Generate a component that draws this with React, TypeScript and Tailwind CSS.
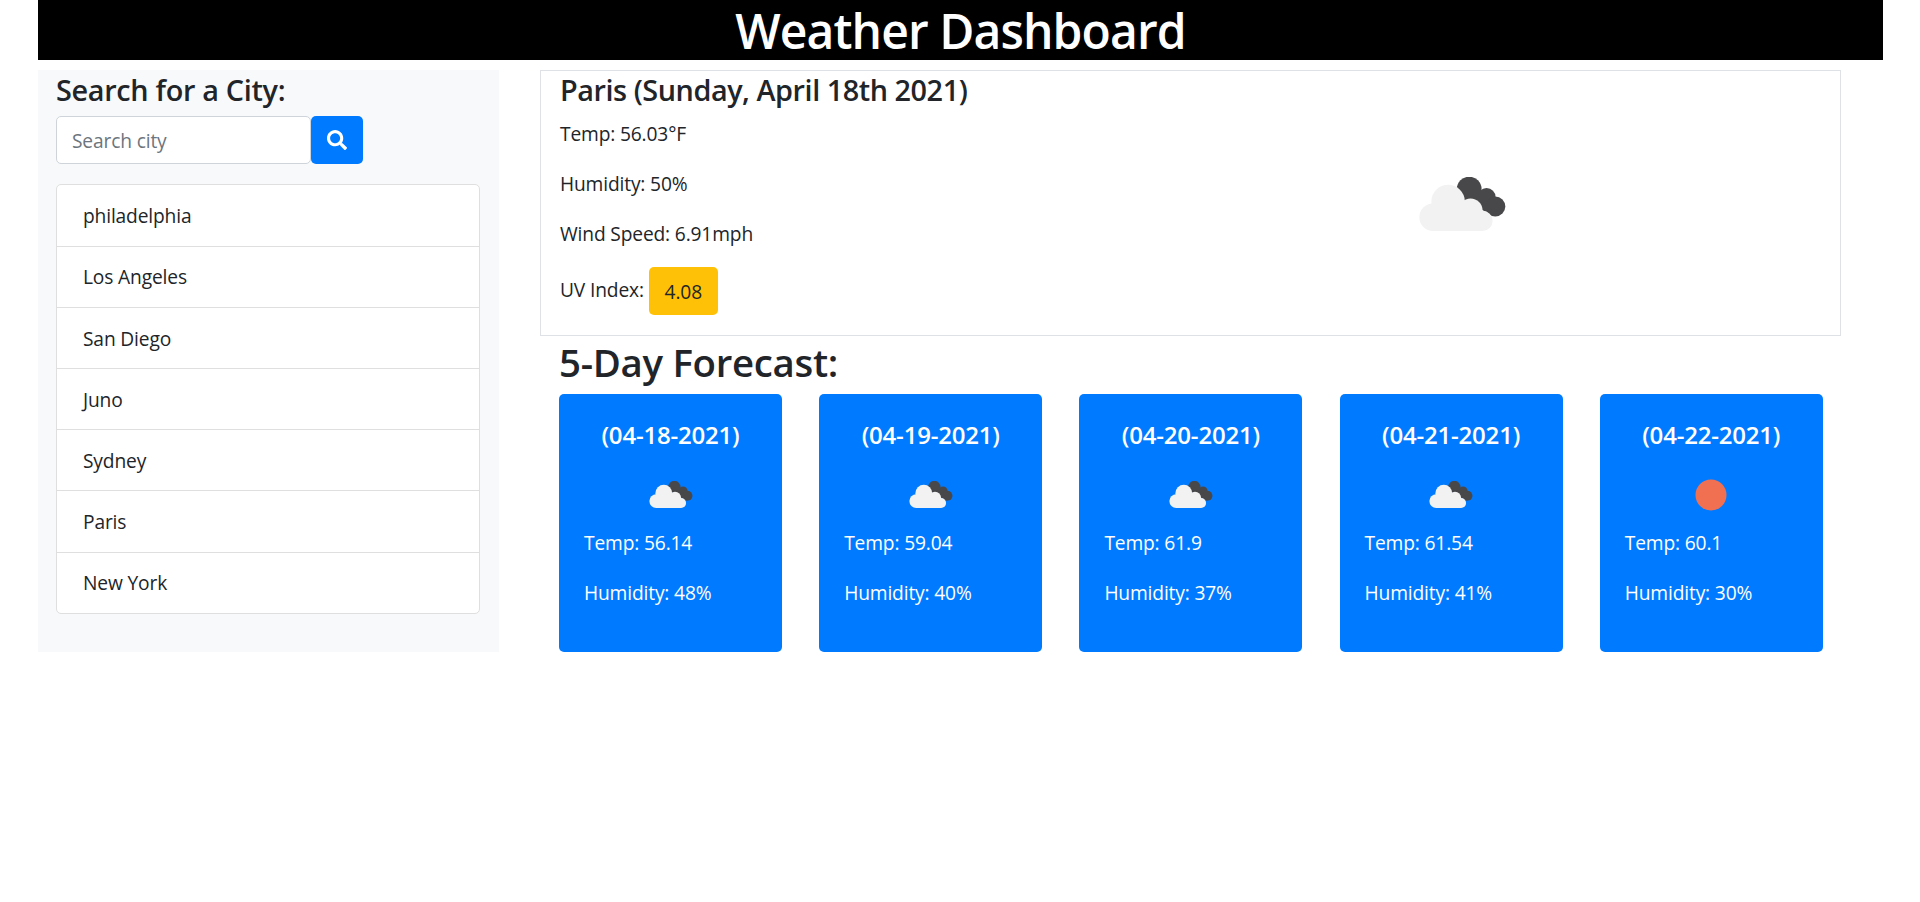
const cities = ['philadelphia', 'Los Angeles', 'San Diego', 'Juno', 'Sydney', 'Paris', 'New York']

const forecast = [
  { date: '(04-18-2021)', temp: '56.14', humidity: '48%', sun: false },
  { date: '(04-19-2021)', temp: '59.04', humidity: '40%', sun: false },
  { date: '(04-20-2021)', temp: '61.9', humidity: '37%', sun: false },
  { date: '(04-21-2021)', temp: '61.54', humidity: '41%', sun: false },
  { date: '(04-22-2021)', temp: '60.1', humidity: '30%', sun: true },
]

function CloudIcon({ className }: { className: string }) {
  return (
    <svg viewBox="118 52 260 161" className={className}>
      <g fill="#48484a">
        <circle cx="268" cy="88" r="37" />
        <circle cx="320" cy="112" r="27" />
        <circle cx="346" cy="140" r="30" />
        <polygon points="240,90 300,90 345,168 305,150" />
      </g>
      <g fill="#f2f2f2">
        <circle cx="160" cy="172" r="41" />
        <circle cx="205" cy="125" r="50" />
        <circle cx="272" cy="152" r="36" />
        <circle cx="308" cy="183" r="30" />
        <rect x="160" y="150" width="148" height="63" />
      </g>
    </svg>
  )
}

function SunIcon() {
  return (
    <svg viewBox="0 0 50 50" className="w-[50px] h-[50px]">
      <circle cx="25" cy="25" r="15.5" fill="#f27052" />
    </svg>
  )
}

export default function App() {
  return (
    <div className="min-h-[902px] bg-white pl-[38px] pr-[37px] text-[19.2px] leading-[1.5] text-[#212529] font-['Open_Sans','Noto_Sans',sans-serif] tracking-[-0.15px]">
      <header className="h-[60px] bg-black text-center text-[48px] leading-[62px] font-semibold text-white tracking-[-0.9px]">
        Weather Dashboard
      </header>

      <div className="mt-[10px] flex items-start">
        <aside className="w-[461px] h-[582px] shrink-0 bg-[#f8f9fa] px-[18px]">
          <h2 className="text-[28.8px] leading-[1.2] font-semibold pt-[3px] tracking-[-0.3px]">Search for a City:</h2>
          <div className="mt-[8px] flex">
            <input
              placeholder="Search city"
              className="w-[255px] h-[48px] rounded-[5px] border border-[#ced4da] bg-white px-[15px] pt-[1px] text-[19.2px] outline-none placeholder:text-[#6c757d]"
            />
            <button className="w-[52px] h-[48px] rounded-[5px] bg-[#007bff] flex items-center justify-center">
              <svg viewBox="0 0 512 512" className="w-[20px] h-[20px]" fill="#fff">
                <path d="M505 442.700L405.300 343c-4.500-4.500-10.600-7-17-7H372c27.600-35.300 44-79.700 44-128C416 93.100 322.900 0 208 0S0 93.100 0 208s93.100 208 208 208c48.300 0 92.700-16.400 128-44v16.300c0 6.400 2.500 12.500 7 17l99.700 99.700c9.400 9.400 24.600 9.400 33.900 0l28.300-28.300c9.400-9.400 9.400-24.600.1-34zM208 336c-70.700 0-128-57.200-128-128 0-70.700 57.200-128 128-128 70.700 0 128 57.200 128 128 0 70.700-57.200 128-128 128z" />
              </svg>
            </button>
          </div>
          <ul className="mt-[20px] w-[424px] rounded-[5px] border border-[#dfdfdf] bg-white">
            {cities.map((city, i) => (
              <li
                key={city}
                className={`h-[61.2px] flex items-center pl-[26px] pt-[2px] ${i > 0 ? 'border-t border-[#dfdfdf]' : ''}`}
              >
                {city}
              </li>
            ))}
          </ul>
        </aside>

        <main className="ml-[41px] w-[1301px]">
          <section className="h-[266px] border border-[#dee2e6] px-[19px] flex">
            <div className="w-[544px] shrink-0">
              <h3 className="text-[28.8px] leading-[1.2] font-semibold mt-[2px] tracking-[-0.45px]">Paris (Sunday, April 18th 2021)</h3>
              <p className="mt-[12px]">Temp: 56.03°F</p>
              <p className="mt-[21.500px]">Humidity: 50%</p>
              <p className="mt-[21.500px]">Wind Speed: 6.91mph</p>
              <div className="mt-[18px] flex items-start">
                <span className="mt-[9px]">UV Index:</span>
                <span className="ml-[5px] w-[69px] h-[48px] rounded-[5px] bg-[#ffc107] flex items-center justify-center pt-[3px]">4.08</span>
              </div>
            </div>
            <div className="flex-1 flex items-center justify-center pt-[2px]">
              <CloudIcon className="w-[87px] h-[54px]" />
            </div>
          </section>

          <h2 className="mt-[3px] ml-[19px] text-[38.4px] leading-[1.2] font-semibold tracking-[-0.3px]">5-Day Forecast:</h2>

          <div className="mt-[9px] ml-[19px] flex gap-[37.200px]">
            {forecast.map(day => (
              <div key={day.date} className="w-[223px] h-[258px] shrink-0 rounded-[5px] bg-[#007bff] text-white px-[25px]">
                <h5 className="pt-[27px] text-center text-[24px] leading-[1.2] font-semibold tracking-[-0.2px]">{day.date}</h5>
                <div className="mt-[20px] h-[50px] flex items-center justify-center">
                  {day.sun ? <SunIcon /> : <CloudIcon className="w-[44px] h-[27px]" />}
                </div>
                <p className="mt-[9px]">Temp: {day.temp}</p>
                <p className="mt-[21px]">Humidity: {day.humidity}</p>
              </div>
            ))}
          </div>
        </main>
      </div>
    </div>
  )
}
